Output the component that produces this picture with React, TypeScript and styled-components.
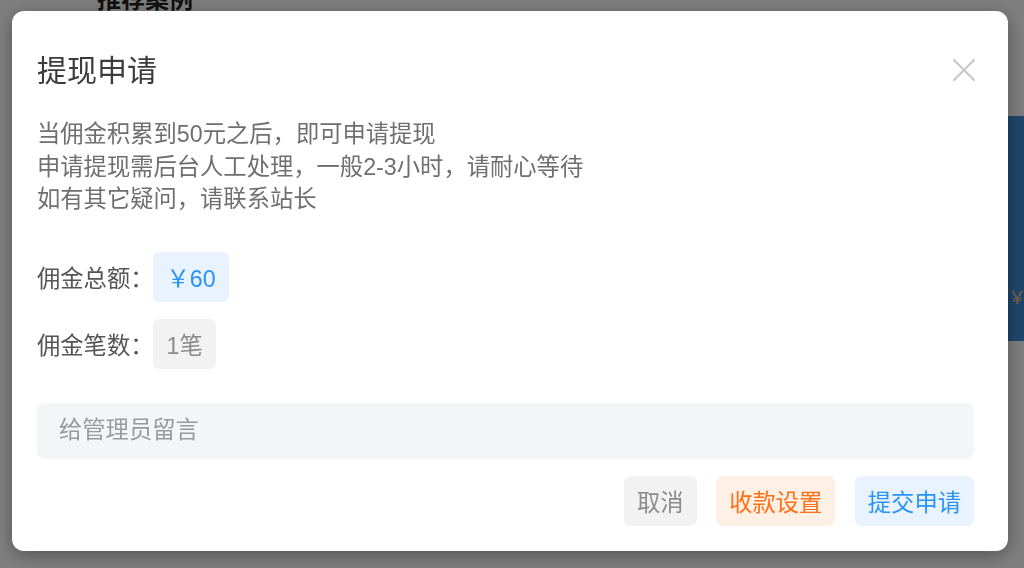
import React from "react";
import styled, { createGlobalStyle } from "styled-components";

const GlobalStyle = createGlobalStyle`
  html, body {
    margin: 0;
    padding: 0;
    height: 100%;
    overflow: hidden;
    background: #ffffff;
    font-family: "Liberation Sans", "Noto Sans CJK SC", sans-serif;
  }
  * {
    box-sizing: border-box;
  }
`;

const Page = styled.div`
  display: grid;
  grid-template-columns: 1008px 320px;
  height: 568px;
  background: #ffffff;
`;

const MainColumn = styled.div`
  padding: 0 0 0 97px;
`;

const SectionHeading = styled.h2`
  margin: -17px 0 0;
  font-size: 24px;
  line-height: 34px;
  font-weight: 700;
  color: #222;
`;

const SideCard = styled.div`
  margin-top: 116px;
  height: 225px;
  background: linear-gradient(90deg, #3e8ed6, #3a8ddc);
  display: flex;
  align-items: flex-end;
  padding: 0 0 32px 0;
`;

const SideCardText = styled.span`
  font-size: 18px;
  color: #f4c79a;
`;

const Overlay = styled.div`
  position: fixed;
  inset: 0;
  background: rgba(0, 0, 0, 0.5);
  display: flex;
  align-items: flex-start;
  padding: 11px 0 0 12px;
`;

const Dialog = styled.div`
  width: 996px;
  height: 540px;
  background: #ffffff;
  border-radius: 12px;
  box-shadow: 0 4px 18px rgba(0, 0, 0, 0.35);
  padding: 25px 34px 25px 25px;
  display: flex;
  flex-direction: column;
`;

const Header = styled.div`
  display: flex;
  align-items: center;
  justify-content: space-between;
  height: 64px;
`;

const Title = styled.h1`
  margin: 0;
  font-size: 30px;
  font-weight: 400;
  color: #3c3c3c;
`;

const CloseButton = styled.button`
  border: 0;
  background: none;
  padding: 0;
  width: 26px;
  height: 26px;
  margin-right: -3px;
  margin-top: 4px;
  display: flex;
  align-items: center;
  justify-content: center;
  cursor: pointer;
`;

const Notice = styled.div`
  margin-top: 18px;
  font-size: 23.3px;
  line-height: 32.5px;
  color: #6f6f6f;
`;

const InfoList = styled.div`
  margin-top: 36px;
  display: flex;
  flex-direction: column;
  gap: 17px;
`;

const InfoRow = styled.div`
  display: flex;
  align-items: center;
  height: 50px;
`;

const InfoLabel = styled.span`
  flex: 0 0 116px;
  white-space: nowrap;
  font-size: 23.3px;
  color: #555;
`;

const Tag = styled.span<{ $tone: "blue" | "gray" }>`
  height: 50px;
  display: inline-flex;
  align-items: center;
  padding: 0 13px;
  border-radius: 6px;
  font-size: 23.3px;
  white-space: nowrap;
  background: ${(p) => (p.$tone === "blue" ? "#e8f3ff" : "#f2f2f2")};
  color: ${(p) => (p.$tone === "blue" ? "#2a93f4" : "#8a8a8a")};
`;

const MessageInput = styled.input`
  margin-top: 34px;
  height: 56px;
  width: 100%;
  border: 0;
  outline: none;
  border-radius: 8px;
  background: #f4f5f7;
  padding: 0 22px;
  font-family: inherit;
  font-size: 23.3px;
  color: #333;
  &::placeholder {
    color: #9a9a9a;
  }
`;

const Footer = styled.div`
  margin-top: 17px;
  display: flex;
  justify-content: flex-end;
  gap: 19.5px;
`;

const tones = {
  gray: { bg: "#f2f2f2", fg: "#8c8c8c" },
  orange: { bg: "#fff0e6", fg: "#ff6f16" },
  blue: { bg: "#e8f3ff", fg: "#2a93f4" },
};

const ActionButton = styled.button<{ $tone: keyof typeof tones }>`
  height: 50px;
  padding: 0 13px;
  border: 0;
  border-radius: 7px;
  font-family: inherit;
  font-size: 23.3px;
  white-space: nowrap;
  cursor: pointer;
  background: ${(p) => tones[p.$tone].bg};
  color: ${(p) => tones[p.$tone].fg};
`;

export default function App() {
  return (
    <>
      <GlobalStyle />
      <Page>
        <MainColumn>
          <SectionHeading>推荐案例</SectionHeading>
        </MainColumn>
        <SideCard>
          <SideCardText>￥ 120</SideCardText>
        </SideCard>
      </Page>
      <Overlay>
        <Dialog>
          <Header>
            <Title>提现申请</Title>
            <CloseButton aria-label="关闭">
              <svg width="24" height="24" viewBox="0 0 24 24">
                <path
                  d="M2 2 L22 22 M22 2 L2 22"
                  stroke="#c8c8c8"
                  strokeWidth="2.2"
                  strokeLinecap="round"
                />
              </svg>
            </CloseButton>
          </Header>
          <Notice>
            当佣金积累到50元之后，即可申请提现
            <br />
            申请提现需后台人工处理，一般2-3小时，请耐心等待
            <br />
            如有其它疑问，请联系站长
          </Notice>
          <InfoList>
            <InfoRow>
              <InfoLabel>佣金总额：</InfoLabel>
              <Tag $tone="blue">￥60</Tag>
            </InfoRow>
            <InfoRow>
              <InfoLabel>佣金笔数：</InfoLabel>
              <Tag $tone="gray">1笔</Tag>
            </InfoRow>
          </InfoList>
          <MessageInput placeholder="给管理员留言" />
          <Footer>
            <ActionButton $tone="gray">取消</ActionButton>
            <ActionButton $tone="orange">收款设置</ActionButton>
            <ActionButton $tone="blue">提交申请</ActionButton>
          </Footer>
        </Dialog>
      </Overlay>
    </>
  );
}
